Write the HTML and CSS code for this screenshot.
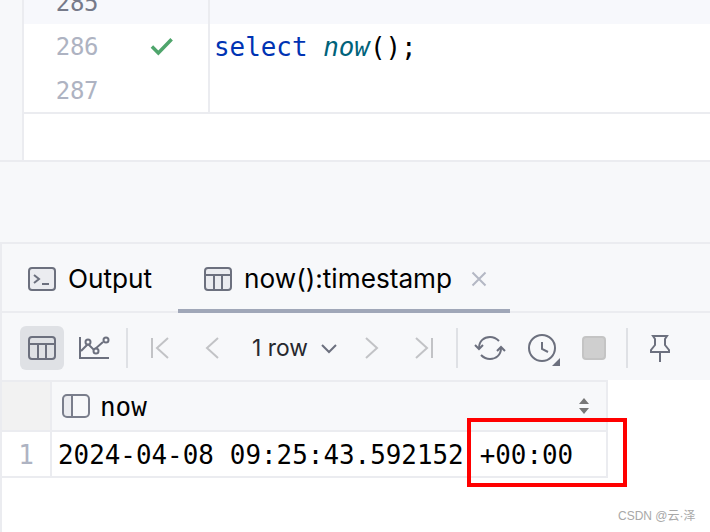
FILE: index.html
```html
<!DOCTYPE html>
<html lang="en">
<head>
<meta charset="utf-8">
<title>now()</title>
<link rel="stylesheet" href="styles.css">
</head>
<body>
<div class="page">
  <section class="editor">
    <div class="editor-inner">
      <div class="lines">
        <div class="line line-muted">
          <div class="gutter"><span class="num num-dark">285</span><span class="mark"></span></div>
          <div class="code"></div>
        </div>
        <div class="line">
          <div class="gutter"><span class="num">286</span><span class="mark">
            <svg width="26" height="22" viewBox="0 0 28 24"><path d="M3 11.5 L10 18.5 L24.5 3.5" fill="none" stroke="#4fa56c" stroke-width="3.8"/></svg>
          </span></div>
          <div class="code"><span class="kw">select</span> <span class="fn">now</span>();</div>
        </div>
        <div class="line">
          <div class="gutter"><span class="num">287</span><span class="mark"></span></div>
          <div class="code"></div>
        </div>
      </div>
    </div>
  </section>

  <section class="tool">
    <div class="tabs">
      <div class="tab tab-output">
        <svg class="tab-icon" width="28" height="24" viewBox="0 0 28 24" fill="none" stroke="#6c707e" stroke-width="2"><rect x="1" y="1" width="26" height="22" rx="3" fill="#ebecf0"/><path d="M6 8l5 4-5 4M14 17h7"/></svg>
        <span>Output</span>
      </div>
      <div class="tab tab-active">
        <svg class="tab-icon" width="28" height="24" viewBox="0 0 28 24" fill="none" stroke="#6c707e" stroke-width="2"><rect x="1" y="1" width="26" height="22" rx="3" fill="#ebecf0"/><path d="M1 8h26M10 8v15M18 8v15"/></svg>
        <span>now():timestamp</span>
        <svg class="close" width="16" height="16" viewBox="0 0 16 16" fill="none" stroke="#b4b8c4" stroke-width="2"><path d="M1.5 1.5l13 13M14.5 1.5l-13 13"/></svg>
      </div>
    </div>

    <div class="toolbar">
      <div class="btn btn-on">
        <svg width="28" height="24" viewBox="0 0 28 24" fill="none" stroke="#6c707e" stroke-width="2"><rect x="1" y="1" width="26" height="22" rx="3"/><path d="M1 8h26M10 8v15M18 8v15"/></svg>
      </div>
      <div class="btn">
        <svg class="chart" width="32" height="24" viewBox="0 0 32 24" fill="none" stroke="#6c707e" stroke-width="2"><path d="M1 1v21h29"/><path d="M2 15l7-7 6 6 9-8"/><circle cx="9" cy="6" r="2.5" fill="#f7f8fa"/><circle cx="17" cy="15" r="2.5" fill="#f7f8fa"/><circle cx="27" cy="4" r="2.5" fill="#f7f8fa"/></svg>
      </div>
      <div class="sep"></div>
      <div class="btn">
        <svg width="20" height="22" viewBox="0 0 20 22" fill="none" stroke="#c2c3c6" stroke-width="2"><path d="M2 1v20M18 1L7 11l11 10"/></svg>
      </div>
      <div class="btn">
        <svg width="14" height="22" viewBox="0 0 14 22" fill="none" stroke="#c2c3c6" stroke-width="2"><path d="M13 1L2 11l11 10"/></svg>
      </div>
      <div class="rows">
        <span>1 row</span>
        <svg width="16" height="10" viewBox="0 0 16 10" fill="none" stroke="#6c707e" stroke-width="2"><path d="M1 1l7 7 7-7"/></svg>
      </div>
      <div class="btn">
        <svg width="14" height="22" viewBox="0 0 14 22" fill="none" stroke="#c2c3c6" stroke-width="2"><path d="M1 1l11 10L1 21"/></svg>
      </div>
      <div class="btn">
        <svg width="20" height="22" viewBox="0 0 20 22" fill="none" stroke="#c2c3c6" stroke-width="2"><path d="M18 1v20M2 1l11 10L2 21"/></svg>
      </div>
      <div class="sep"></div>
      <div class="btn">
        <svg width="32" height="26" viewBox="0 0 32 26" fill="none" stroke="#6c707e" stroke-width="2"><path d="M5 13C5 6 10 2 16 2c4 0 7 2 9 4"/><path d="M27 13c0 7-5 11-11 11-4 0-7-2-9-4"/><path d="M1 10l4 4 4-4M23 16l4-4 4 4"/></svg>
      </div>
      <div class="btn">
        <svg width="28" height="28" viewBox="0 0 28 28" fill="none" stroke="#6c707e" stroke-width="2"><circle cx="14" cy="14" r="13"/><path d="M14 8v7l6 3"/></svg>
        <span class="corner"></span>
      </div>
      <div class="btn"><span class="stop"></span></div>
      <div class="sep"></div>
      <div class="btn">
        <svg class="pin" width="20" height="28" viewBox="0 0 20 28" fill="none" stroke="#6c707e" stroke-width="2"><path d="M3 1h14l-2 3v6l4 5v2H1v-2l4-5V4z"/><path d="M10 17v10"/></svg>
      </div>
    </div>

    <div class="grid-area">
      <div class="grid-table">
        <div class="row-head">
          <div class="corner-cell"></div>
          <div class="col-head">
            <svg width="28" height="24" viewBox="0 0 28 24"><rect x="1" y="1" width="9" height="22" fill="#ebecf0"/><rect x="1" y="1" width="26" height="22" rx="4" fill="none" stroke="#7a7e8c" stroke-width="2"/><path d="M10 1v22" stroke="#7a7e8c" stroke-width="2"/></svg>
            <span class="col-name">now</span>
            <svg class="sort" width="12" height="16" viewBox="0 0 12 16" fill="#777"><path d="M6 0l5 6H1zM1 10h10l-5 6z"/></svg>
          </div>
        </div>
        <div class="row-body">
          <div class="row-num">1</div>
          <div class="cell">2024-04-08 09:25:43.592152 +00:00</div>
        </div>
      </div>
    </div>
  </section>

  <div class="highlight"></div>
  <div class="watermark">CSDN @云·泽</div>
</div>
</body>
</html>
```

FILE: styles.css
```css
* { box-sizing: border-box; }
html, body { margin: 0; padding: 0; }
body { width: 710px; height: 532px; overflow: hidden; background: #f7f8fa; }
.page { position: relative; width: 710px; height: 532px; overflow: hidden; display: flex; flex-direction: column; font-family: Inter, sans-serif; color: #000; }

/* Editor */
.editor { height: 162px; flex: none; padding-left: 22px; border-bottom: 2px solid #ebecf0; overflow: hidden; }
.editor-inner { height: 100%; background: #fff; border-left: 2px solid #ebecf0; overflow: hidden; }
.lines { margin-top: -20px; border-bottom: 2px solid #ebecf0; }
.line { display: flex; height: 44px; }
.line-muted { background: #f7f8fc; }
.gutter { width: 186px; flex: none; display: flex; align-items: center; padding-top: 2px; border-right: 2px solid #ebecf0; font-family: "DejaVu Sans Mono", monospace; font-size: 24px; letter-spacing: -0.4px; }
.num { width: 74px; text-align: right; color: #aeb3c2; }
.num-dark { color: #767a8a; }
.mark { margin-left: 51px; display: flex; }
.code { padding: 1px 0 0 4px; font-family: "DejaVu Sans Mono", monospace; font-size: 25.9px; line-height: 44px; white-space: pre; }
.kw { color: #0033b3; }
.fn { color: #00627a; font-style: italic; }

/* Tool window */
.tool { margin-top: 80px; flex: 1; border-top: 2px solid #ebecf0; border-left: 2px solid #ebecf0; display: flex; flex-direction: column; min-height: 0; }
.tabs { height: 69px; flex: none; display: flex; border-bottom: 2px solid #ebecf0; }
.tab { display: flex; align-items: center; font-size: 26.2px; margin-bottom: -2px; border-bottom: 4px solid transparent; padding-top: 4px; }
.tab-output { width: 176px; padding-left: 26px; }
.tab-active { width: 332px; padding-left: 26px; border-bottom-color: #a0a7b8; }
.tab-icon { margin-right: 12px; flex: none; }
.close { margin-left: 19px; }

.toolbar { height: 67px; flex: none; display: flex; align-items: center; gap: 8px; padding: 2px 0 0 18px; }
.btn { position: relative; width: 44px; height: 44px; flex: none; display: flex; align-items: center; justify-content: center; border-radius: 6px; }
.btn-on { background: #dfe1e5; }
.chart { margin-left: 2px; }
.pin { margin-top: 2px; }
.sep { width: 2px; height: 40px; margin: 0 2px; flex: none; background: #dfe1e5; }
.rows { width: 100px; padding-left: 10px; flex: none; display: flex; align-items: center; font-size: 22.8px; color: #27282e; }
.rows svg { margin-left: 13px; margin-top: 3px; }
.corner { position: absolute; right: 4px; bottom: 4px; width: 0; height: 0; border-style: solid; border-width: 0 0 8px 8px; border-color: transparent transparent #6c707e transparent; }
.stop { display: block; width: 24px; height: 24px; border-radius: 4px; background: #cfcfcf; border: 2px solid #c4c4c4; }

/* Result grid */
.grid-area { flex: 1; background: #fff; min-height: 0; }
.grid-table { width: 606px; border-top: 2px solid #ebecf0; border-right: 2px solid #ebecf0; border-bottom: 2px solid #ebecf0; }
.row-head { display: flex; height: 50px; border-bottom: 2px solid #ebecf0; }
.corner-cell { width: 48px; flex: none; background: #f2f2f2; }
.col-head { flex: 1; display: flex; align-items: center; padding-left: 10px; background: #f7f8fa; border-left: 2px solid #ebecf0; }
.col-name { margin: 1px 0 0 10px; font-family: "DejaVu Sans Mono", monospace; font-size: 25.9px; }
.sort { margin-left: auto; margin-right: 16px; }
.row-body { display: flex; height: 44px; }
.row-num { width: 48px; flex: none; padding-top: 1px; text-align: center; color: #aeb3c2; font-family: "DejaVu Sans Mono", monospace; font-size: 26px; line-height: 44px; }
.cell { flex: 1; padding: 1px 0 0 6px; border-left: 2px solid #ebecf0; font-family: "DejaVu Sans Mono", monospace; font-size: 25.9px; word-spacing: 0.4px; line-height: 44px; white-space: pre; }

/* Overlays */
.highlight { position: absolute; left: 467px; top: 418px; width: 160px; height: 69px; border: 4px solid #ff0000; }
.watermark { position: absolute; left: 618px; top: 507px; font-family: "Liberation Sans", "Noto Sans CJK SC", sans-serif; font-size: 12px; line-height: 18px; color: #a8a8a8; white-space: nowrap; }
```
